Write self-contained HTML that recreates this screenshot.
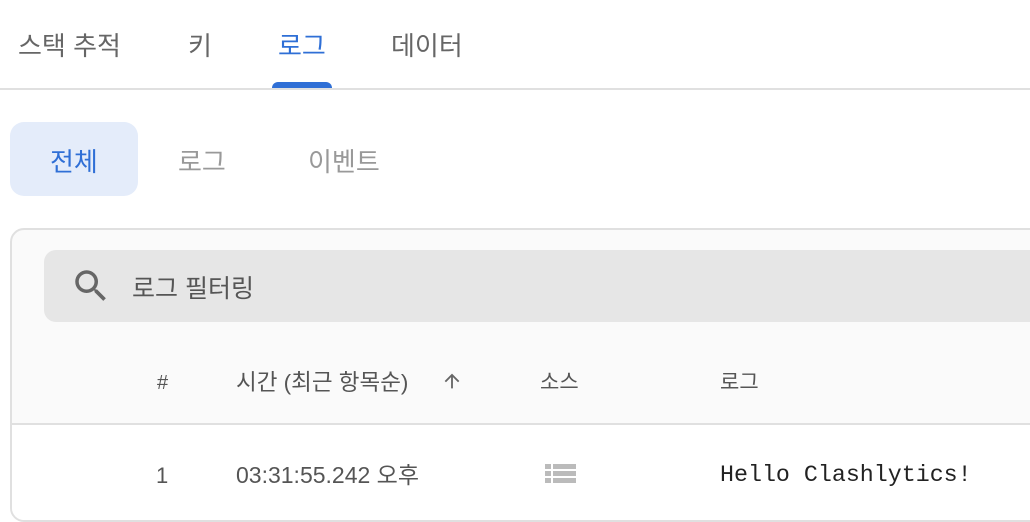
<!DOCTYPE html><html><head><meta charset="utf-8"><style>
*{margin:0;padding:0;box-sizing:border-box}
body{width:1030px;height:522px;overflow:hidden;background:#fff;font-family:"Liberation Sans","Noto Sans CJK KR",sans-serif;position:relative}
.a{position:absolute;white-space:nowrap;line-height:1.2}
</style></head><body>
<div class="a" style="left:18px;top:31px;font-size:26px;color:#666">스택 추적</div>
<div class="a" style="left:188px;top:31px;font-size:26px;color:#666">키</div>
<div class="a" style="left:278px;top:31px;font-size:26px;color:#2f6fd6">로그</div>
<div class="a" style="left:391px;top:31px;font-size:26px;color:#666">데이터</div>
<div class="a" style="left:272px;top:82px;width:60px;height:7px;background:#2f6fd6;border-radius:6px 6px 0 0"></div>
<div class="a" style="left:0;top:88px;width:1030px;height:2px;background:#e0e0e0"></div>
<div class="a" style="left:10px;top:122px;width:128px;height:74px;background:#e4ecfa;border-radius:14px"></div>
<div class="a" style="left:50px;top:147px;font-size:26px;color:#2f6fd6">전체</div>
<div class="a" style="left:178px;top:147px;font-size:26px;color:#999">로그</div>
<div class="a" style="left:308px;top:147px;font-size:26px;color:#999">이벤트</div>
<div class="a" style="left:10px;top:228px;width:1040px;height:294px;border:2px solid #e0e0e0;border-radius:14px;background:#fafafa;overflow:hidden">
 <div class="a" style="left:0;top:193px;width:100%;height:100px;background:#fff;border-top:2px solid #e0e0e0"></div>
</div>
<div class="a" style="left:44px;top:250px;width:1000px;height:72px;background:#e6e6e6;border-radius:12px"></div>
<svg class="a" style="left:70px;top:265px" width="42" height="42" viewBox="0 0 24 24"><path fill="#666" d="M15.5 14h-.79l-.28-.27A6.470 6.470 0 0 0 16 9.5 6.5 6.5 0 1 0 9.5 16c1.610 0 3.090-.59 4.230-1.57l.27.28v.79l5 4.990L20.490 19l-4.990-5zm-6 0C7.010 14 5 11.990 5 9.5S7.010 5 9.5 5 14 7.010 14 9.5 11.990 14 9.5 14z"/></svg>
<div class="a" style="left:132px;top:274px;font-size:25px;color:#555">로그 필터링</div>
<div class="a" style="left:157px;top:371px;font-size:20px;color:#555">#</div>
<div class="a" style="left:236px;top:369px;font-size:22.5px;color:#555">시간 (최근 항목순)</div>
<svg class="a" style="left:441px;top:370px" width="22" height="22" viewBox="0 0 24 24"><path fill="#666" d="M4 12l1.410 1.410L11 7.830V20h2V7.830l5.580 5.590L20 12l-8-8-8 8z"/></svg>
<div class="a" style="left:540px;top:370px;font-size:21px;color:#555">소스</div>
<div class="a" style="left:720px;top:370px;font-size:21px;color:#555">로그</div>
<div class="a" style="left:156px;top:463px;font-size:22px;color:#555">1</div>
<div class="a" style="left:236px;top:462px;font-size:23px;color:#555">03:31:55.242 오후</div>
<svg class="a" style="left:545px;top:462px" width="31" height="24" viewBox="0 0 31 24"><g fill="#bbb"><rect x="0" y="2" width="6" height="5"/><rect x="8" y="2" width="23" height="5"/><rect x="0" y="9" width="6" height="5"/><rect x="8" y="9" width="23" height="5"/><rect x="0" y="16" width="6" height="5"/><rect x="8" y="16" width="23" height="5"/></g></svg>
<div class="a" style="left:720px;top:462px;font-size:23.3px;color:#222;font-family:'Liberation Mono',monospace">Hello Clashlytics!</div>
</body></html>
